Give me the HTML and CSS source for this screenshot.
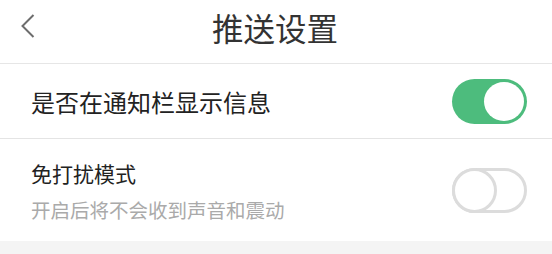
FILE: index.html
```html
<!DOCTYPE html>
<html lang="zh">
<head>
<meta charset="utf-8">
<link rel="stylesheet" href="styles.css">
</head>
<body>
<div class="page">
  <header class="nav">
    <span class="back">
      <svg width="14" height="24" viewBox="0 0 14 24"><polyline points="12.5,1 1.5,12 12.5,23" fill="none" stroke="#6d6d6d" stroke-width="2"/></svg>
    </span>
    <h1 class="title">推送设置</h1>
  </header>
  <div class="row row-main">
    <span class="label">是否在通知栏显示信息</span>
    <span class="switch on"><span class="knob"></span></span>
  </div>
  <div class="row row-sub">
    <div class="texts">
      <span class="label-sm">免打扰模式</span>
      <span class="desc">开启后将不会收到声音和震动</span>
    </div>
    <span class="switch off"><span class="knob"></span></span>
  </div>
</div>
</body>
</html>
```

FILE: styles.css
```css
html, body {
  margin: 0;
  padding: 0;
  background: #f4f4f4;
  font-family: "Noto Sans CJK SC", "Noto Sans", sans-serif;
}
.page {
  background: #fff;
}
.nav {
  position: relative;
  height: 63px;
  border-bottom: 1px solid #e6e6e6;
  display: flex;
  align-items: center;
  justify-content: center;
}
.back {
  position: absolute;
  left: 21px;
  top: 14px;
  width: 14px;
  height: 24px;
}
.back svg { display: block; }
.title {
  margin: 0;
  font-size: 31.5px;
  font-weight: 400;
  color: #333;
  line-height: 40px;
  margin-top: -9px;
  margin-left: -2px;
}
.row {
  display: flex;
  align-items: center;
  justify-content: space-between;
  padding: 0 25px 0 31px;
}
.row-main {
  height: 74px;
  border-bottom: 1px solid #e4e4e4;
}
.label {
  font-size: 24px;
  color: #222;
  line-height: 32px;
  margin-top: 1px;
}
.row-sub {
  height: 102px;
}
.texts {
  display: flex;
  flex-direction: column;
  gap: 10px;
  margin-top: 2px;
}
.label-sm {
  font-size: 21px;
  line-height: 28px;
  color: #222;
}
.desc {
  font-size: 19.5px;
  line-height: 26px;
  color: #aaa;
}
.switch {
  position: relative;
  width: 75px;
  height: 45px;
  border-radius: 23px;
  box-sizing: border-box;
  flex: none;
}
.switch.on {
  background: #4dbc7d;
}
.switch.on .knob {
  position: absolute;
  right: 3px;
  top: 3px;
  width: 40px;
  height: 39px;
  border-radius: 50%;
  background: #fff;
}
.switch.off {
  background: #fff;
  border: 3px solid #dcdcdc;
}
.switch.off .knob {
  position: absolute;
  left: -3px;
  top: -3px;
  width: 45px;
  height: 45px;
  box-sizing: border-box;
  border: 3px solid #dcdcdc;
  border-radius: 50%;
  background: #fff;
}
```
